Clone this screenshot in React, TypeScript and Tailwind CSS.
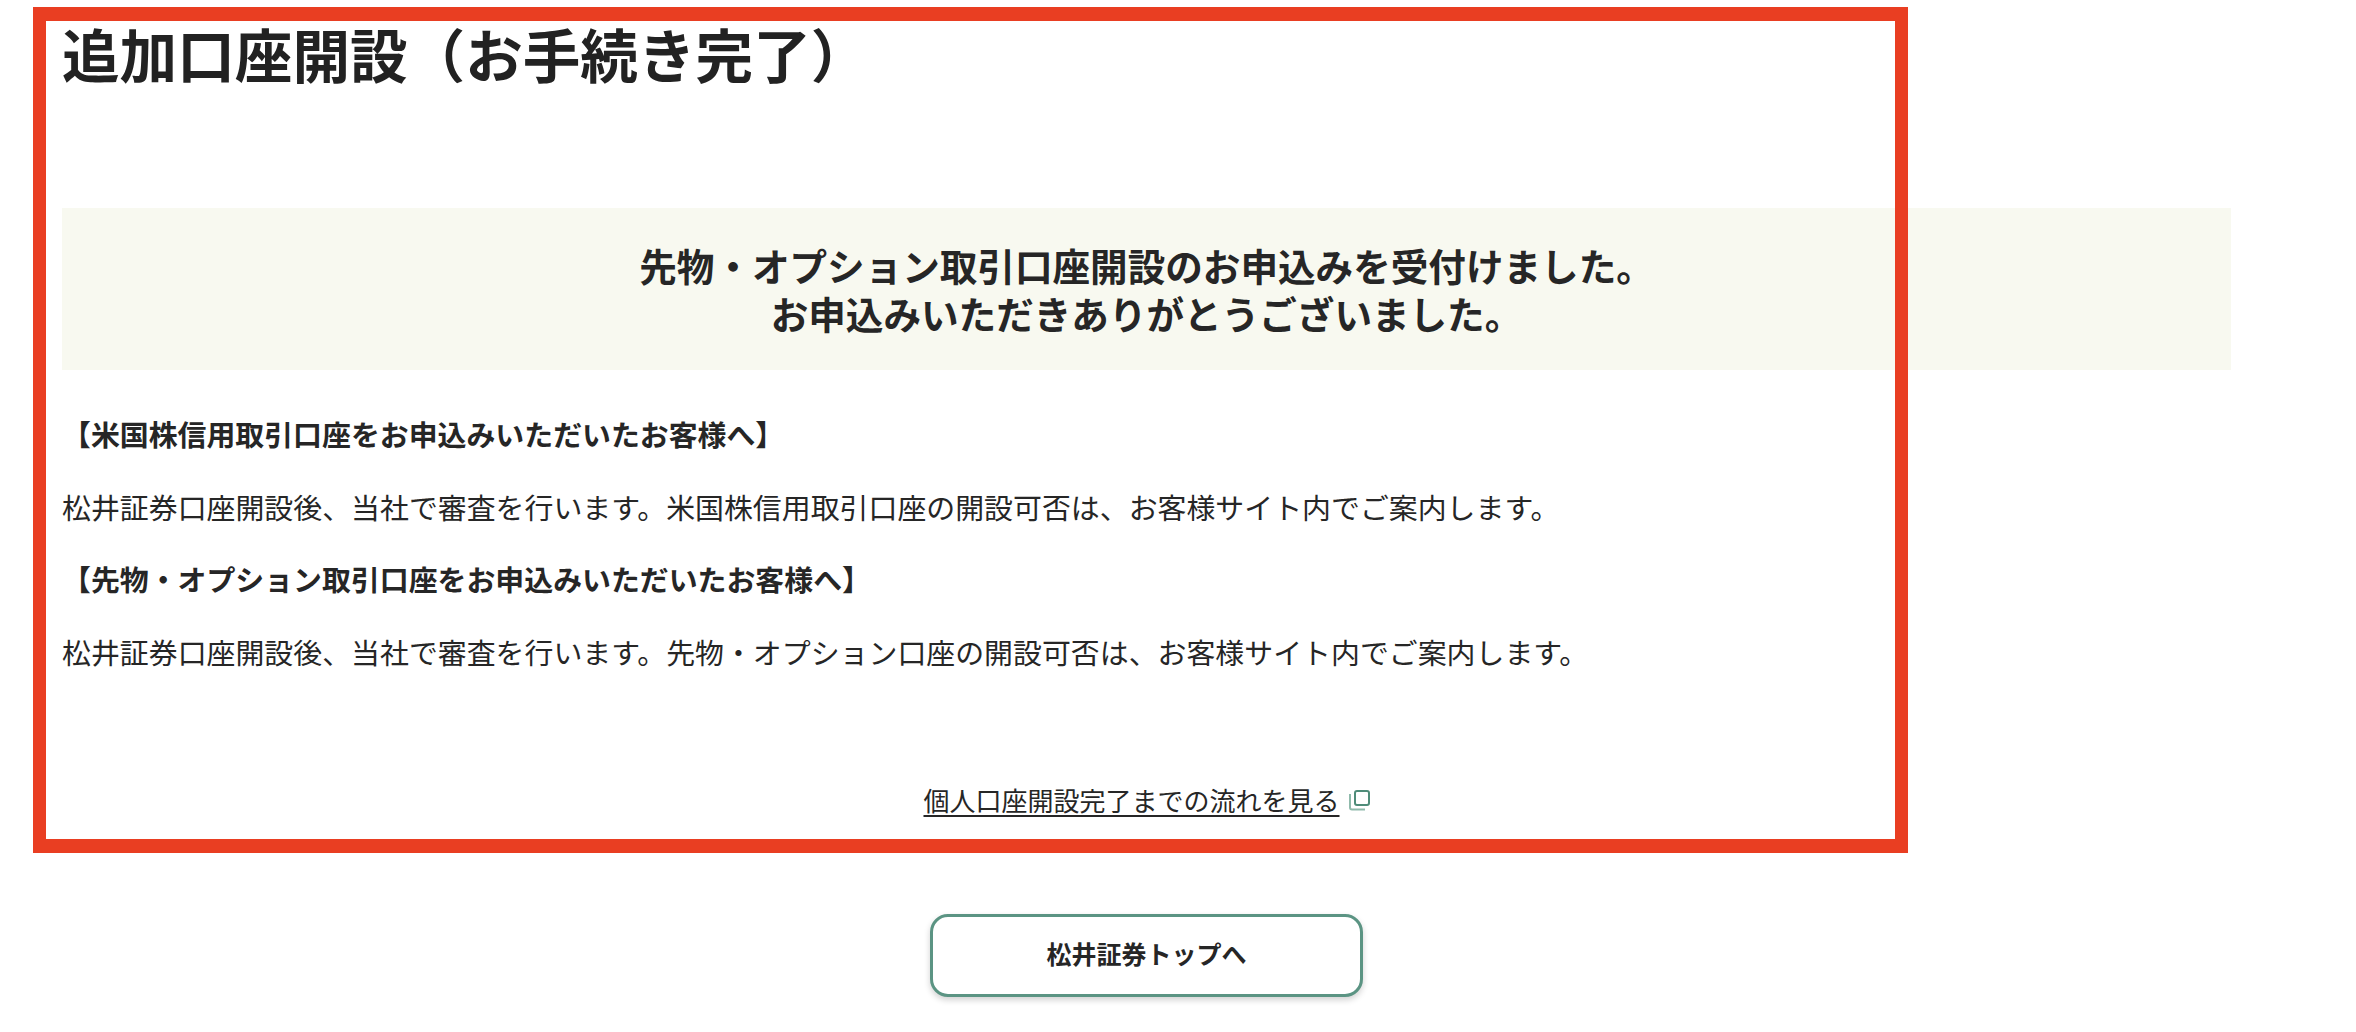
import React from 'react';

const Section = ({ title, body }: { title: string; body: string }) => (
  <>
    <p className="h-11 text-[28.9px] leading-11 font-bold text-[#262626]">{title}</p>
    <p className="mt-[29px] mb-[28px] h-11 text-[28.92px] leading-11 text-[#262626]">{body}</p>
  </>
);

const App = () => {
  return (
    <div className="relative h-[1032px] w-full overflow-hidden bg-white font-['Noto_Sans_CJK_JP',sans-serif]">
      <div className="ml-[62px] w-[2169px] pt-[11px]">
        <h1 className="h-[84px] text-[57.6px] leading-[84px] font-bold text-[#222222]">
          追加口座開設（お手続き完了）
        </h1>

        <div className="mt-[113px] flex h-[162px] flex-col items-center justify-center bg-[#f8f9f0] text-center text-[37.6px] leading-[48px] font-bold text-[#262626]">
          <p>先物・オプション取引口座開設のお申込みを受付けました。</p>
          <p>お申込みいただきありがとうございました。</p>
        </div>

        <div className="mt-[41px]">
          <Section
            title="【米国株信用取引口座をお申込みいただいたお客様へ】"
            body="松井証券口座開設後、当社で審査を行います。米国株信用取引口座の開設可否は、お客様サイト内でご案内します。"
          />
          <Section
            title="【先物・オプション取引口座をお申込みいただいたお客様へ】"
            body="松井証券口座開設後、当社で審査を行います。先物・オプション口座の開設可否は、お客様サイト内でご案内します。"
          />
        </div>

        <div className="mt-[107px] flex h-[39px] items-center justify-center gap-2 text-[26px] leading-[39px] text-[#262626]">
          <a className="underline underline-offset-4">個人口座開設完了までの流れを見る</a>
          <svg className="h-[22px] w-[22px]" viewBox="0 0 22 22" fill="none">
            <path d="M2 5v13.5a2 2 0 0 0 2 2h13" stroke="#8fbaab" strokeWidth="2" />
            <rect x="7" y="2" width="14" height="14" rx="2" stroke="#4f8c79" strokeWidth="2" />
          </svg>
        </div>

        <div className="mt-[95px] flex justify-center">
          <button className="flex h-[83px] w-[433px] items-center justify-center rounded-[18px] border-[3px] border-[#5b9483] bg-white pb-[3px] text-[25px] font-bold text-[#262626] shadow-[0_3px_6px_rgba(0,0,0,0.18)]">
            松井証券トップへ
          </button>
        </div>
      </div>

      {/* annotation frame drawn over the page */}
      <div className="pointer-events-none absolute top-[7px] left-[33px] h-[846px] w-[1875px] border-x-[13px] border-y-[14px] border-[#e93e22]" />
    </div>
  );
};

export default App;
